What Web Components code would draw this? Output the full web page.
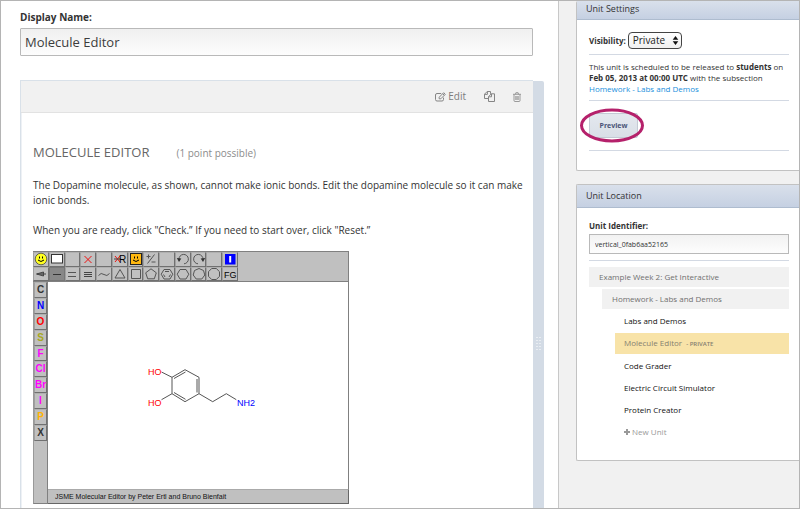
<!DOCTYPE html>
<html lang="en">
<head>
<meta charset="utf-8">
<title>Unit: Molecule Editor</title>
<style>
  html, body { margin: 0; }
  body { font: 10px/15px "Open Sans", "Noto Sans", sans-serif; color: #333; background: #fff; }
</style>
</head>
<body>
<unit-page>
  <display-name value="Molecule Editor"></display-name>
  <unit-component heading="MOLECULE EDITOR" points="(1 point possible)">
    <p>The Dopamine molecule, as shown, cannot make ionic bonds. Edit the dopamine molecule so it can make ionic bonds.</p>
    <p>When you are ready, click "Check.” If you need to start over, click "Reset.”</p>
    <molecule-editor></molecule-editor>
  </unit-component>
  <side-panel slot="side" heading="Unit Settings" scrolled>
    <unit-settings></unit-settings>
  </side-panel>
  <side-panel slot="side" heading="Unit Location">
    <unit-location></unit-location>
  </side-panel>
</unit-page>

<script>
const define = (name, html) => customElements.define(name, class extends HTMLElement {
  constructor() {
    super();
    const t = document.createElement('template');
    t.innerHTML = typeof html === 'function' ? html(this) : html;
    this.attachShadow({ mode: 'open' }).append(t.content.cloneNode(true));
  }
});

define('unit-page', `
<style>
  :host { display: grid; grid-template-columns: minmax(0, 1fr) 240px; min-height: 100vh; box-sizing: border-box; border: 1px solid #b4b4b4; }
  main { display: flex; flex-direction: column; padding: 9px 14px 0 19px; border-right: 1px solid #c8c8c8; background: #fff; }
  aside { display: flex; flex-direction: column; gap: 13px; padding-left: 17px; background: #f1f1f1; }
</style>
<main><slot></slot></main>
<aside><slot name="side"></slot></aside>`);

define('display-name', el => `
<style>
  :host { display: flex; flex-direction: column; gap: 3px; margin-right: 11px; }
  label { font-weight: 700; color: #333; }
  input { box-sizing: border-box; width: 100%; height: 28px; margin: 0; padding: 0 4px; border: 1px solid #b9b9b9; border-radius: 1px; outline: 0;
    background: linear-gradient(#f0f0f0, #fdfdfd); font: 13px "Open Sans", sans-serif; color: #3c3c3c; }
</style>
<label for="name">Display Name:</label>
<input id="name" type="text" value="${el.getAttribute('value')}">`);

define('unit-component', el => `
<style>
  :host { display: flex; flex: 1; margin-top: 24px; }
  section { flex: 1; min-width: 0; border: 1px solid #d9e1e9; border-width: 1px 0 0 1px; box-shadow: inset 1px 0 #eef1f5; }
  header { display: flex; justify-content: flex-end; align-items: center; gap: 18px; height: 32px; padding-right: 12px; background: #f1f1f1; border-bottom: 1px solid #e2e2e2; box-sizing: border-box; }
  button { display: flex; align-items: center; gap: 2px; padding: 0; border: 0; background: none; font: 10px/15px "Open Sans", sans-serif; color: #7c7c7c; }
  svg { display: block; fill: none; stroke: #858585; }
  .body { padding: 31px 4px 3px 12px; display: flex; flex-direction: column; gap: 15px; }
  .title { display: flex; align-items: baseline; gap: 27px; margin-bottom: 2px; }
  h2 { margin: 0; font-weight: 400; font-size: 13px; line-height: 16px; color: #666; }
  .title span { color: #8c8c8c; }
  ::slotted(p) { margin: 0; }
  .handle { width: 11px; background: #d3dbe5; margin-top: 1px; padding-top: 256px; box-sizing: border-box; border-radius: 0 2px 0 0; }
  .handle svg { margin: auto; }
</style>
<section>
  <header>
    <button type="button"><svg width="11" height="10" viewBox="0 0 11 10"><path d="M8.500 5.600v1.900a1.500 1.500 0 0 1-1.500 1.500H2A1.500 1.500 0 0 1 .5 7.500V3A1.500 1.500 0 0 1 2 1.500h4.200"/><path d="M4.200 6.800V5.200L8.700.7l1.600 1.600-4.500 4.500z"/><path d="M7.700 1.700l1.600 1.600"/></svg>Edit</button>
    <button type="button" aria-label="Duplicate"><svg width="11" height="11" viewBox="0 0 11 11"><path d="M4.500 7.500h-4V3.200L3.200.5h3.300v2.300M3.400.5v2.900H.5"/><path d="M4.500 10.500V5.700l2.800-2.900h3.200v7.700zM7.500 2.800v3h-3"/></svg></button>
    <button type="button" aria-label="Delete"><svg width="8" height="10" viewBox="0 0 8 10"><path d="M0 2.300h8M2.500 2.300l.4-1.600h2.200l.4 1.600M1 2.500v6q0 1 1 1h4q1 0 1-1v-6M2.800 4v4M4 4v4M5.200 4v4" stroke-width=".8"/></svg></button>
  </header>
  <div class="body">
    <div class="title"><h2>${el.getAttribute('heading')}</h2><span>${el.getAttribute('points')}</span></div>
    <slot></slot>
  </div>
</section>
<div class="handle"><svg width="5" height="14" viewBox="0 0 5 14"><path d="M1 0v14M4 0v14" stroke="#fff" stroke-dasharray="1 2"/></svg></div>`);

const stroke = (d, c = '#555') => `<path d="${d}" fill="none" stroke="${c}"/>`;
const face = (shape) => `${shape}<path d="M5.500 4.500v2M8.500 4.500v2M4 8q3 3 6 0" fill="none" stroke="#000"/>`;
const tools = [
  ['Smiles', face('<circle cx="7" cy="7" r="5.800" fill="#ffff20" stroke="#333" stroke-width=".7"/>')],
  ['Clear', '<rect x="1.500" y="2.500" width="11" height="8.500" fill="#fff" stroke="#333"/>'],
  ['', ''],
  ['Delete', stroke('M3.500 4l7 7M10.500 4l-7 7', '#f01010')],
  ['', ''],
  ['Delete group', stroke('M2 4l5 6M7 4l-5 6', '#f01010') + stroke('M1 7h7', '#444') + '<text x="6" y="10.500" font-size="10">R</text>'],
  ['Query', face('<rect x="1.500" y="1.500" width="11" height="11" fill="#ffb810" stroke="#222"/>')],
  ['Charge', stroke('M2.500 4.500h4M4.500 2.500v4M10.500 2.500l-7 9M7.500 10h4')],
  ['', ''],
  ['Undo', stroke('M3 7.500a4.700 4.700 0 1 1 5 4.300') + '<path d="M.8 6l4.500.5-2.300 3.500z" fill="#333"/>'],
  ['Redo', stroke('M11 7.500a4.700 4.700 0 1 0-5 4.300') + '<path d="M13.200 6l-4.500.5 2.300 3.500z" fill="#333"/>'],
  ['', ''],
  ['Info', '<rect x="2" y="2" width="10.500" height="10.500" fill="#00f"/><path d="M7.200 4v6.500" stroke="#fff" stroke-width="2"/>'],
  ['Stereo bond', '<path d="M2.500 7l7-2v4z" fill="#888" stroke="#444"/><path d="M3 7h9" stroke="#444"/>'],
  ['Single bond', stroke('M3 7.500h8', '#333')],
  ['Double bond', stroke('M3 5.500h8M3 9.500h8')],
  ['Triple bond', stroke('M3 5.500h8M3 7.500h8M3 9.500h8', '#444')],
  ['Chain', stroke('M1.500 8.500q2.500-3.500 5.500-1t5.500-1')],
  ['Triangle', stroke('M7 2.500l5 8.500H2z')],
  ['Square', stroke('M2.500 2.500h9v9h-9z')],
  ['Pentagon', stroke('M7 1.800l5.300 4-2 6H3.700l-2-6z')],
  ['Benzene', stroke('M4 2.500h6l2.800 4.700L10 12H4L1.200 7.200zM5 4.500h4M3.500 7.500l1.500 2.500M10.500 7.500L9 10')],
  ['Hexagon', stroke('M4 2.500h6l2.800 4.700L10 12H4L1.200 7.200z')],
  ['Heptagon', stroke('M7 1.500l4.500 2 1.300 4.500-3 4H4.200l-3-4 1.300-4.500z')],
  ['Octagon', stroke('M4.700 1.500h4.600l3.200 3.200v4.600l-3.200 3.200H4.700L1.500 9.300V4.700z')],
  ['Functional groups', '<text x="1" y="11" font-size="9">FG</text>']
];
const atoms = [['C', '#333'], ['N', '#00f'], ['O', '#f00'], ['S', '#a8a820'], ['F', '#f0f'], ['Cl', '#f0f'], ['Br', '#f0f'], ['I', '#f0f'], ['P', '#ffb400'], ['X', '#333']];

define('molecule-editor', () => `
<style>
  :host { display: grid; grid-template: 31px 207px 15px / 15px minmax(0, 1fr); width: 316px; max-width: 100%; margin-top: -2px; background: #fff; font-family: "Liberation Sans", Arial, sans-serif; }
  .top, .atoms, footer { background: #c0c0c0; box-sizing: border-box; }
  .top { grid-column: 1 / 3; border: 1px solid #808080; border-left: 0; }
  .tools { display: grid; grid-template: repeat(2, 1fr) / repeat(13, 1fr); width: 205px; height: 100%; }
  .atoms { grid-row: 2 / 4; border-bottom: 1px solid #808080; border-left: 1px solid #999; border-right: 1px solid #808080; }
  .list { display: grid; grid-template-rows: repeat(10, 1fr); height: 159px; }
  button { display: flex; align-items: center; justify-content: center; min-width: 0; min-height: 0; margin: 0; padding: 0; border: 1px solid; border-color: #b0b0b0 #707070 #707070 #a0a0a0; background: #c0c0c0; font: 700 10px/12px "Liberation Sans", Arial, sans-serif; }
  button.on { background: #888; border-color: #777; }
  button svg { display: block; width: 14px; height: 14px; flex: none; }
  .canvas { display: block; width: 100%; height: 100%; box-sizing: border-box; border-right: 1px solid #808080; }
  footer { padding-left: 7px; border: 1px solid #666; border-width: 1px 1px 1px 0; border-top-color: #aaa; font-size: 7px; line-height: 13px; color: #111; white-space: nowrap; }
  text { font-family: "Liberation Sans", Arial, sans-serif; font-weight: 400; }
</style>
<div class="top"><div class="tools">
${tools.map(([n, s]) => `<button type="button" aria-label="${n || 'Spare'}"${n === 'Single bond' ? ' class="on"' : ''}><svg viewBox="0 0 14 14">${s}</svg></button>`).join('')}
</div></div>
<div class="atoms"><div class="list">${atoms.map(([a, c]) => `<button type="button" style="color:${c}">${a}</button>`).join('')}</div></div>
<svg class="canvas" viewBox="48 282 300 207" preserveAspectRatio="xMinYMin">
  <g fill="none" stroke="#555">
    <path d="M161.500 372l10.500 5.300 13-7.600 14 7.600v16.400l-14 8-13-8v-16.400M172 393.700l-10.500 6M199 393.700l13.700 8 13.600-8 10 6"/>
    <path d="M174 378.500l11.500-6.500M197 379v13.500M174 392.500l11.500 6.800"/>
  </g>
  <g font-size="9"><text x="148" y="375" fill="#f00">HO</text><text x="148" y="406" fill="#f00">HO</text><text x="237" y="406" fill="#00f">NH2</text></g>
</svg>
<footer>JSME Molecular Editor by Peter Ertl and Bruno Bienfait</footer>`);

define('side-panel', el => `
<style>
  :host { display: block; border: 1px solid #c2c2c2; border-right: 0; background: #fff; border-radius: 2px 0 0 2px; }
  :host([scrolled]) { border-top: 0; }
  h2 { margin: 0; padding: 3px 9px 4px; border-bottom: 1px solid #aebccf; background: linear-gradient(#d9e0eb, #c5d0e2); font-weight: 400; font-size: 9px; line-height: 15px; color: #333; }
  :host([scrolled]) h2 { padding-top: 0; padding-bottom: 3px; }
  .body { padding: 12px 10px 0 12px; }
  :host([scrolled]) .body { padding-top: 13px; }
</style>
<h2>${el.getAttribute('heading')}</h2>
<div class="body"><slot></slot></div>`);

define('unit-settings', `
<style>
  :host { display: flex; flex-direction: column; padding-bottom: 19px; font-size: 8px; line-height: 11px; }
  .row { display: flex; align-items: center; gap: 2px; padding-bottom: 5px; margin-top: -1px; border-bottom: 1px solid #d3d9e3; }
  label, b { font-weight: 700; color: #333; }
  .pick { position: relative; display: block; }
  select { appearance: none; width: 54px; height: 17px; margin: 0; padding: 0 0 0 4px; border: 1px solid #444; border-radius: 4px; background: linear-gradient(#fff, #f0f0f0); font: 10px/15px "Open Sans", sans-serif; color: #222; }
  .pick svg { position: absolute; right: 3px; top: 4px; pointer-events: none; }
  p { margin: 0; padding: 6px 0; border-bottom: 1px solid #d3d9e3; }
  a { color: #1a8fdc; text-decoration: none; }
  .act { padding: 12px 0; border-bottom: 1px solid #d3d9e3; }
  .mark { position: relative; display: inline-block; vertical-align: top; }
  button { display: block; width: 49px; height: 25px; padding: 0; border: 1px solid #c3cad4; border-radius: 2px; background: linear-gradient(#e4e8ee, #d9dfe7); font: 700 7px/10px "Open Sans", sans-serif; color: #4a5478; }
  .mark svg { position: absolute; left: -10px; top: -5px; pointer-events: none; }
</style>
<div class="row"><label for="v">Visibility:</label><span class="pick"><select id="v"><option>Private</option><option>Public</option></select><svg width="7" height="9" viewBox="0 0 7 9"><path d="M3.500 0L6.300 3.800H.7zM3.500 9L.7 5.200h5.600z" fill="#111"/></svg></span></div>
<p>This unit is scheduled to be released to <b>students</b> on <b>Feb 05, 2013 at 00:00 UTC</b> with the subsection <a href="#">Homework - Labs and Demos</a></p>
<div class="act"><span class="mark"><button type="button">Preview</button><svg width="66" height="35" viewBox="0 0 66 35"><ellipse cx="33" cy="17.500" rx="30.500" ry="15.500" fill="none" stroke="#b5216b" stroke-width="3"/></svg></span></div>`);

define('unit-location', `
<style>
  :host { display: block; padding-bottom: 18px; font-size: 8px; line-height: 11px; }
  label { display: block; font-weight: 700; color: #333; padding-bottom: 3px; }
  input { display: block; box-sizing: border-box; width: 100%; height: 20px; margin: 0 0 6px; padding: 0 5px; border: 1px solid #b9b9b9; outline: 0; background: linear-gradient(#f2f2f2, #fdfdfd); font: 7px/11px "Open Sans", sans-serif; color: #333; }
  nav { display: flex; flex-direction: column; gap: 2px; padding-top: 6px; border-top: 1px solid #d3d9e3; }
  a { display: block; margin-left: 26px; padding: 0 9px; line-height: 20px; color: #111; text-decoration: none; }
  .l1, .l2 { margin-left: 0; padding: 0 10px; background: #f1f1f1; color: #707070; }
  .l2 { margin-left: 13px; }
  .on { background: #f8e3a8; color: #858070; }
  small { font-size: 6px; font-weight: 600; margin-left: 4px; }
  .new { color: #999; }
</style>
<label for="i">Unit Identifier:</label>
<input id="i" type="text" value="vertical_0fab6aa52165" readonly>
<nav>
  <a class="l1" href="#">Example Week 2: Get Interactive</a>
  <a class="l2" href="#">Homework - Labs and Demos</a>
  <a href="#">Labs and Demos</a>
  <a class="on" href="#">Molecule Editor<small>- PRIVATE</small></a>
  <a href="#">Code Grader</a>
  <a href="#">Electric Circuit Simulator</a>
  <a href="#">Protein Creator</a>
  <a class="new" href="#"><svg width="6" height="6" viewBox="0 0 6 6"><path d="M3 0v6M0 3h6" stroke="#999" stroke-width="2"/></svg> New Unit</a>
</nav>`);
</script>
</body>
</html>
